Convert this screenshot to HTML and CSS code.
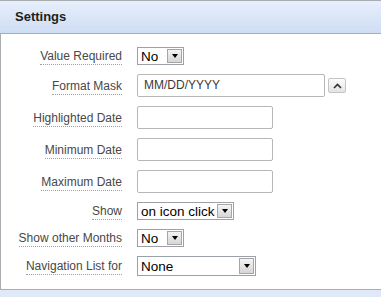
FILE: index.html
```html
<!DOCTYPE html>
<html lang="en">

<head>
    <title>Settings</title>
    <link rel="stylesheet" href="styles.css">
</head>

<body>
    <div class="region">
        <div class="region-header">
            <h2>Settings</h2>
        </div>

        <div class="region-body">
            <div class="field-row">
                <div class="field-label"><span>Value Required</span></div>
                <div class="select select-small">No<span class="select-arrow"></span></div>
            </div>

            <div class="field-row">
                <div class="field-label"><span>Format Mask</span></div>
                <div class="text-input text-wide">MM/DD/YYYY</div>
                <button class="pick-button" type="button">
                    <svg width="9" height="6" viewBox="0 0 9 6">
                        <path d="M1 5 L4.5 1.5 L8 5" fill="none" stroke="#333" stroke-width="1.6"/>
                    </svg>
                </button>
            </div>

            <div class="field-row">
                <div class="field-label"><span>Highlighted Date</span></div>
                <div class="text-input text-date"></div>
            </div>

            <div class="field-row">
                <div class="field-label"><span>Minimum Date</span></div>
                <div class="text-input text-date"></div>
            </div>

            <div class="field-row">
                <div class="field-label"><span>Maximum Date</span></div>
                <div class="text-input text-date"></div>
            </div>

            <div class="field-row">
                <div class="field-label"><span>Show</span></div>
                <div class="select select-show">on icon click<span class="select-arrow"></span></div>
            </div>

            <div class="field-row">
                <div class="field-label"><span>Show other Months</span></div>
                <div class="select select-small">No<span class="select-arrow"></span></div>
            </div>

            <div class="field-row">
                <div class="field-label"><span>Navigation List for</span></div>
                <div class="select select-nav">None<span class="select-arrow"></span></div>
            </div>
        </div>

        <div class="region-footer"></div>
    </div>
</body>

</html>
```

FILE: styles.css
```css
body {
    margin: 0;
    font-family: "Liberation Sans", Arial, sans-serif;
    background-color: #fff;
}

.region {
    width: 381px;
}

.region-header {
    height: 32px;
    border-top: 1px solid #a9adb2;
    border-bottom: 1px solid #a9adb2;
    background: linear-gradient(#e7effc, #cfddf3);
}

.region-header h2 {
    margin: 0;
    padding-left: 15px;
    font-size: 13px;
    line-height: 32px;
    color: #1e1e1e;
}

.region-body {
    display: flex;
    flex-direction: column;
    gap: 9px;
    padding: 13px 0;
    border-left: 1px solid #a9adb2;
}

.field-row {
    display: flex;
    align-items: center;
}

.field-label {
    width: 121px;
    margin-right: 15px;
    text-align: right;
    font-size: 12px;
    color: #484848;
}

.field-label span {
    padding-bottom: 1px;
    border-bottom: 1px dotted #a0a0a0;
}

.text-input {
    box-sizing: border-box;
    height: 23px;
    padding-left: 6px;
    border: 1px solid #b7b7b7;
    border-radius: 2px;
    font-size: 12px;
    line-height: 21px;
    color: #3a3a3a;
}

.text-wide {
    width: 188px;
}

.text-date {
    width: 136px;
}

.pick-button {
    display: flex;
    align-items: center;
    justify-content: center;
    width: 18px;
    height: 15px;
    margin-left: 3px;
    padding: 0;
    border: 1px solid #c4c4c4;
    border-radius: 2px;
    background: linear-gradient(#fbfbfb, #e4e4e4);
}

.select {
    box-sizing: border-box;
    display: flex;
    align-items: center;
    justify-content: space-between;
    height: 18px;
    padding: 1px 1px 1px 3px;
    border: 1px solid #9ba1a6;
    font-size: 13.5px;
    white-space: nowrap;
    color: #000;
}

.select-small {
    width: 47px;
}

.select-show {
    width: 97px;
}

.select-nav {
    width: 119px;
    height: 20px;
}

.select-arrow {
    box-sizing: border-box;
    display: flex;
    align-items: center;
    justify-content: center;
    flex-shrink: 0;
    width: 15px;
    height: 100%;
    border: 1px solid #a6a6a6;
    background: linear-gradient(#f4f4f4, #d6d6d6);
}

.select-arrow::after {
    content: "";
    border-left: 3.5px solid transparent;
    border-right: 3.5px solid transparent;
    border-top: 4px solid #000;
}

.region-footer {
    height: 8px;
    border-top: 1px solid #a9adb2;
    background-color: #dfe9f8;
}
```
